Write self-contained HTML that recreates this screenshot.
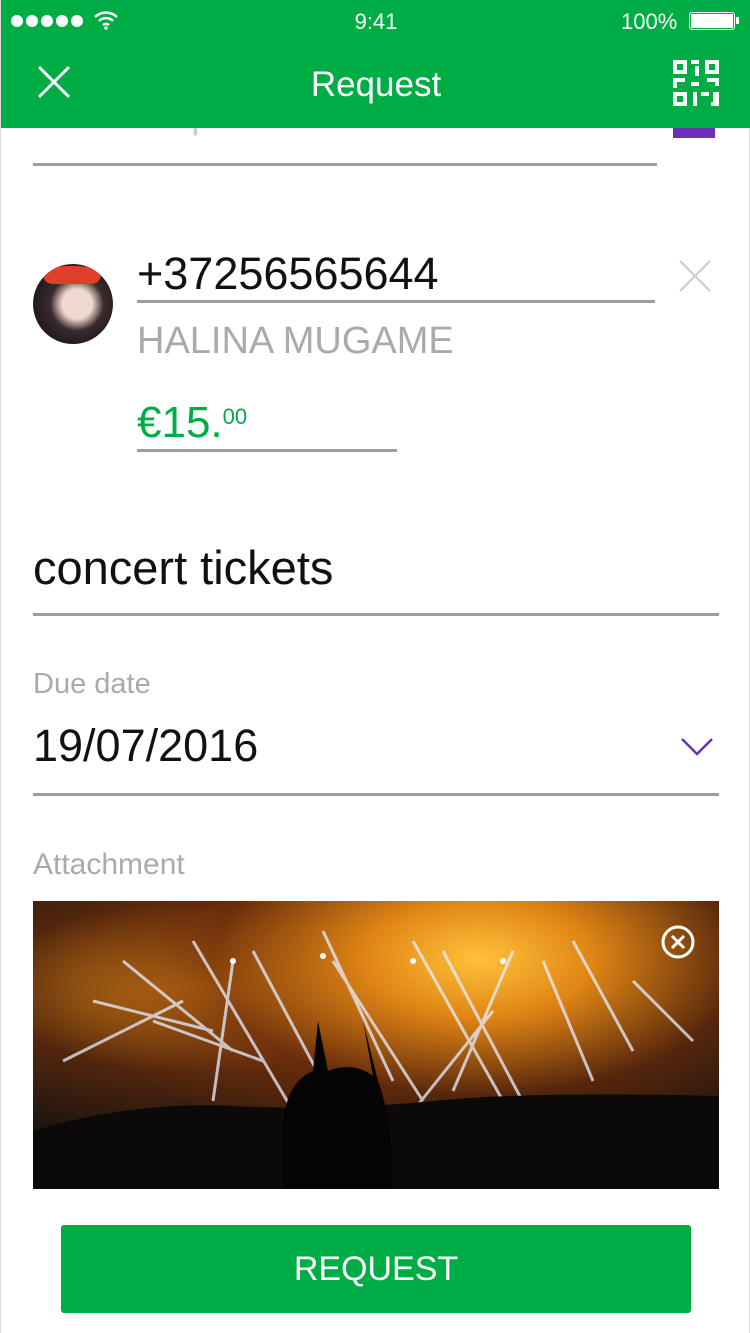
<!DOCTYPE html>
<html><head><meta charset="utf-8"><style>
*{margin:0;padding:0;box-sizing:border-box}
body{width:750px;height:1333px;background:#fff;font-family:"Liberation Sans",sans-serif;position:relative;overflow:hidden;border-left:1px solid #ddd;border-right:1px solid #ddd}
.abs{position:absolute}
.line{position:absolute;height:3px;background:#9e9e9e}
</style></head><body>
<div class="abs" style="left:0;top:0;width:750px;height:128px;background:#00ad45;z-index:5">
 <svg class="abs" style="left:8px;top:13px" width="80" height="16"><g fill="#fff"><circle cx="8" cy="8" r="6"/><circle cx="23" cy="8" r="6"/><circle cx="38" cy="8" r="6"/><circle cx="53" cy="8" r="6"/><circle cx="68" cy="8" r="6"/></g></svg>
 <svg class="abs" style="left:92px;top:10px" width="26" height="20" viewBox="0 0 26 20"><path d="M2 7a16 16 0 0 1 22 0M6 11a10 10 0 0 1 14 0M10 15a4.5 4.5 0 0 1 6 0" stroke="#fff" stroke-width="2.5" fill="none"/><circle cx="13" cy="18" r="1.8" fill="#fff"/></svg>
 <div class="abs" style="left:0;width:750px;top:9px;text-align:center;color:#fff;font-size:22px">9:41</div>
 <div class="abs" style="left:620px;top:9px;color:#fff;font-size:22px">100%</div>
 <div class="abs" style="left:688px;top:12px;width:46px;height:18px;border:1.5px solid #fff;border-radius:3px;padding:1px"><div style="background:#fff;width:100%;height:100%"></div></div>
 <div class="abs" style="left:735px;top:17px;width:3px;height:7px;background:#fff"></div>
 <svg class="abs" style="left:36px;top:65px" width="34" height="34"><path d="M2 2L32 32M32 2L2 32" stroke="#fff" stroke-width="3"/></svg>
 <div class="abs" style="left:0;width:750px;top:65px;text-align:center;color:#fff;font-size:35px">Request</div>
 <svg class="abs" style="left:672px;top:60px" width="46" height="46" viewBox="0 0 46 46" fill="#fff"><path d="M0 0h14v14H0zM4 4v6h6V4zM32 0h14v14H32zM36 4v6h6V4zM18 0h8v4h-8zM22 6h4v10h-4zM0 18h12v4H4v6H0zM18 22h8v4h-8zM34 18h12v8h-4v-4h-8zM0 32h14v14H0zM4 36v6h6v-6zM20 32h4v14h-4zM28 32h8v4h-8zM40 32h6v14h-8v-4h2z"/></svg>
</div>
<div class="abs" style="left:32px;top:92px;color:#ccc;font-size:40px">Email or phone number</div>
<div class="abs" style="left:672px;top:118px;width:42px;height:20px;background:#6a31b8"></div>
<div class="line" style="left:32px;top:163px;width:624px"></div>
<div class="abs" style="left:32px;top:264px;width:80px;height:80px;border-radius:50%;background:radial-gradient(circle at 55% 50%,#f0d8d0 0 25%,#3a2a2e 45%,#231b1e 70%);overflow:hidden"><div style="position:absolute;left:10px;top:2px;width:58px;height:18px;background:#e0402a;border-radius:50% 50% 10px 10px"></div></div>
<div class="abs" style="left:136px;top:248px;color:#111;font-size:45px">+37256565644</div>
<div class="line" style="left:136px;top:300px;width:518px"></div>
<svg class="abs" style="left:678px;top:260px" width="32" height="32"><path d="M1 1L31 31M31 1L1 31" stroke="#ccc" stroke-width="2"/></svg>
<div class="abs" style="left:136px;top:320px;color:#aaa;font-size:38px">HALINA MUGAME</div>
<div class="abs" style="left:136px;top:398px;color:#00ad45;font-size:44px">€15.<sup style="font-size:22px;vertical-align:top;position:relative;top:6px">00</sup></div>
<div class="line" style="left:136px;top:449px;width:260px"></div>
<div class="abs" style="left:32px;top:540px;color:#111;font-size:47px">concert tickets</div>
<div class="line" style="left:32px;top:613px;width:686px"></div>
<div class="abs" style="left:32px;top:668px;color:#aaa;font-size:29px">Due date</div>
<div class="abs" style="left:32px;top:720px;color:#111;font-size:45px">19/07/2016</div>
<svg class="abs" style="left:679px;top:737px" width="34" height="20"><path d="M2 2L17 17L32 2" stroke="#6a31b8" stroke-width="2.5" fill="none"/></svg>
<div class="line" style="left:32px;top:793px;width:686px"></div>
<div class="abs" style="left:32px;top:848px;color:#aaa;font-size:30px">Attachment</div>
<div class="abs" style="left:32px;top:901px;width:686px;height:288px;overflow:hidden;background:radial-gradient(ellipse at 65% 20%,#ffc23a 0,#e08515 18%,rgba(110,45,10,.7) 42%,transparent 65%),radial-gradient(ellipse at 25% 30%,#e08a18 0,rgba(120,50,10,.6) 30%,transparent 55%),#1a1410">
 <svg class="abs" style="left:0;top:0" width="686" height="288"><g stroke="#e6eeff" stroke-width="3" opacity=".75"><path d="M160 40L260 210M220 50L300 200M290 30L360 180M300 60L390 200M480 50L420 190M510 60L560 180M90 60L200 150M120 120L230 160M460 110L380 210M540 40L600 150M30 160L150 100M380 40L470 200M410 50L500 220M200 60L180 200M600 80L660 140M60 100L180 130"/></g><g fill="#fff"><circle cx="200" cy="60" r="3"/><circle cx="290" cy="55" r="3"/><circle cx="380" cy="60" r="3"/><circle cx="470" cy="60" r="3"/></g><path d="M0 230Q100 200 200 205T400 200T686 195V288H0Z" fill="#0c0a08"/><path d="M250 288V220Q255 180 280 170L285 120L295 170Q320 160 340 175L330 120L345 180Q360 220 360 288Z" fill="#050404"/></svg>
 <svg class="abs" style="left:627px;top:23px" width="36" height="36"><circle cx="18" cy="18" r="15" stroke="#fff" stroke-width="3" fill="none"/><path d="M12 12L24 24M24 12L12 24" stroke="#fff" stroke-width="3"/></svg>
</div>
<div class="abs" style="left:60px;top:1225px;width:630px;height:88px;background:#00ad45;border-radius:3px;color:#fff;font-size:34px;text-align:center;line-height:88px">REQUEST</div>
</body></html>
